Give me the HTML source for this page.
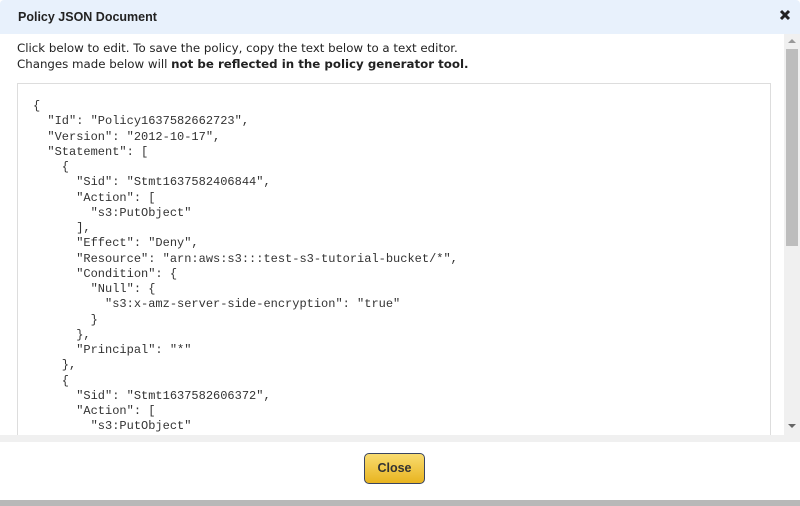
<!DOCTYPE html>
<html><head><meta charset="utf-8"><style>
*{margin:0;padding:0;box-sizing:border-box}
body{width:800px;height:506px;overflow:hidden;background:#fff;font-family:"Liberation Sans",Tahoma,sans-serif;position:relative}
.hdr{position:absolute;left:0;top:0;width:800px;height:34px;background:#e8f1fc;border-radius:4px 4px 0 0}
.hdr .t{position:absolute;left:18px;top:10px;font-size:12.5px;font-weight:bold;color:#222}
.x{position:absolute;right:9px;top:9px}
.body{position:absolute;left:0;top:34px;width:784px;height:401px;background:#fff;overflow:hidden}
.intro{position:absolute;left:17px;top:6px;font-family:"DejaVu Sans",sans-serif;font-size:11.8px;color:#222;line-height:16px}
.ta{position:absolute;left:17px;top:49px;width:754px;height:380px;border:1px solid #ddd;border-bottom:none;background:#fff}
pre{position:absolute;left:15px;top:15px;font-family:"Liberation Mono",monospace;font-size:12px;line-height:15.25px;color:#333}
.sb{position:absolute;left:784px;top:34px;width:16px;height:401px;background:#f0f0f0}
.thumb{position:absolute;left:2px;top:15px;width:12px;height:197px;background:#bdbdbd}
.strip{position:absolute;left:0;top:435px;width:800px;height:7px;background:#f0f0f0}
.foot{position:absolute;left:0;top:442px;width:800px;height:58px;background:#fff}
.btm{position:absolute;left:0;top:500px;width:800px;height:6px;background:#b8b8b8}
.btn{position:absolute;left:364px;top:453px;width:61px;height:31px;border:1px solid #3a4560;border-radius:5px;background:linear-gradient(#f9dc70,#e8b420);font-size:12.5px;font-weight:bold;color:#333;text-align:center;line-height:29px}
</style></head><body>
<div class="hdr"><div class="t">Policy JSON Document</div>
<svg class="x" width="12" height="12" viewBox="0 0 12 12"><path d="M2 2L10 10M10 2L2 10" stroke="#222" stroke-width="3"/></svg></div>
<div class="body">
<div class="intro">Click below to edit. To save the policy, copy the text below to a text editor.<br>Changes made below will <b>not be reflected in the policy generator tool.</b></div>
<div class="ta"><pre>{
  "Id": "Policy1637582662723",
  "Version": "2012-10-17",
  "Statement": [
    {
      "Sid": "Stmt1637582406844",
      "Action": [
        "s3:PutObject"
      ],
      "Effect": "Deny",
      "Resource": "arn:aws:s3:::test-s3-tutorial-bucket/*",
      "Condition": {
        "Null": {
          "s3:x-amz-server-side-encryption": "true"
        }
      },
      "Principal": "*"
    },
    {
      "Sid": "Stmt1637582606372",
      "Action": [
        "s3:PutObject"
      ],</pre></div>
</div>
<div class="sb"><svg style="position:absolute;left:4px;top:4px" width="8" height="5"><path d="M0 5L4 1L8 5Z" fill="#999"/></svg><div class="thumb"></div><svg style="position:absolute;left:4px;top:390px" width="8" height="5"><path d="M0 0L4 4L8 0Z" fill="#666"/></svg></div>
<div class="strip"></div>
<div class="foot"></div>
<div class="btn">Close</div>
<div class="btm"></div>
</body></html>
